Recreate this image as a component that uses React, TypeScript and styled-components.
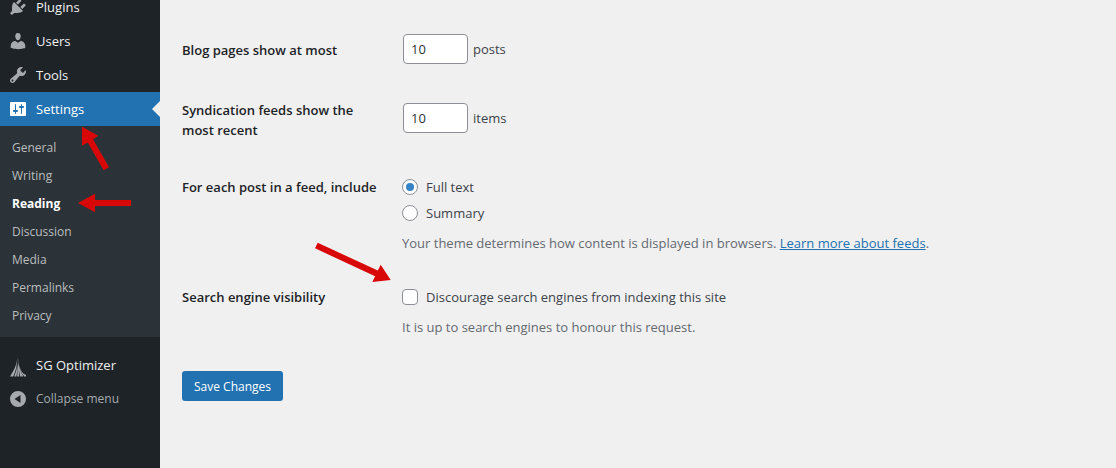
import React from "react";
import styled, { createGlobalStyle, css } from "styled-components";

const GlobalStyle = createGlobalStyle`
  *, *::before, *::after { box-sizing: border-box; }
  body {
    margin: 0;
    background: #f0f0f0;
    color: #3c434a;
    font: 13px/20px "Open Sans", "Noto Sans", sans-serif;
  }
`;

const Page = styled.div`
  position: relative;
  display: flex;
  min-height: 100vh;
  overflow: hidden;
`;

const Sidebar = styled.nav`
  flex: 0 0 160px;
  background: #1d2327;
`;

const Menu = styled.ul`
  list-style: none;
  margin: -10px 0 0;
  padding: 0;
`;

const MenuItem = styled.li<{ $separated?: boolean }>`
  margin-top: ${(p) => (p.$separated ? "11px" : "0")};
`;

const menuRow = css`
  position: relative;
  display: flex;
  align-items: center;
  gap: 8px;
  width: 100%;
  height: 34px;
  padding: 0 8px;
  font: inherit;
  text-decoration: none;
`;

const MenuLink = styled.a<{ $current?: boolean }>`
  ${menuRow}
  color: ${(p) => (p.$current ? "#fff" : "#f0f0f1")};
  background: ${(p) => (p.$current ? "#2271b1" : "transparent")};
  fill: ${(p) => (p.$current ? "#fff" : "#a7aaad")};

  ${(p) =>
    p.$current &&
    css`
      &::after {
        content: "";
        position: absolute;
        right: 0;
        top: 9px;
        border: 8px solid transparent;
        border-left-width: 0;
        border-right-color: #f0f0f0;
      }
    `}
`;

const CollapseButton = styled.button`
  ${menuRow}
  border: 0;
  background: none;
  color: #a7aaad;
  fill: #a7aaad;
  font-size: 12px;
  line-height: 20px;
  text-align: left;
`;

const SubMenu = styled.ul`
  list-style: none;
  margin: 0;
  padding: 8px 0 7px;
  background: #2c3338;
`;

const SubLink = styled.a<{ $current?: boolean }>`
  display: block;
  padding: 4px 12px;
  font-size: 12px;
  text-decoration: none;
  color: ${(p) => (p.$current ? "#fff" : "#bbbdbf")};
  font-weight: ${(p) => (p.$current ? 700 : 400)};
`;

const Content = styled.main`
  flex: 1;
  min-width: 0;
  padding: 19px 20px 60px 22px;
`;

const Row = styled.div`
  display: grid;
  grid-template-columns: 220px minmax(0, 1fr);
`;

const Heading = styled.div<{ $group?: boolean }>`
  padding: ${(p) => (p.$group ? "20px 20px 18px 0" : "21px 20px 17px 0")};
  font-weight: 600;
  color: #1d2327;
`;

const NumberField = styled.div`
  display: flex;
  align-items: center;
  gap: 5px;
  padding: 15px 1px;
`;

const Choices = styled.div`
  padding: 17px 0 14px;
`;

const NumberInput = styled.input`
  width: 65px;
  height: 30px;
  padding: 0 7px;
  border: 1px solid #8c8f94;
  border-radius: 4px;
  background: #fff;
  color: #2c3338;
  font: inherit;
`;

const Choice = styled.label`
  display: flex;
  align-items: center;
  gap: 8px;
  height: 26px;
`;

const Tick = styled.input`
  appearance: none;
  display: grid;
  place-items: center;
  width: 16px;
  height: 16px;
  margin: 0;
  border: 1px solid #8c8f94;
  border-radius: ${(p) => (p.type === "radio" ? "50%" : "4px")};
  background: #fff;

  &:checked::before {
    content: "";
    width: 8px;
    height: 8px;
    border-radius: ${(p) => (p.type === "radio" ? "50%" : "1px")};
    background: #3582c4;
  }
`;

const Description = styled.p`
  margin: 7px 0 0;
  color: #646970;
`;

const TextLink = styled.a`
  color: #2271b1;
`;

const SaveButton = styled.button`
  height: 30px;
  margin-top: 20px;
  padding: 1px 12px 0;
  border: 0;
  border-radius: 3px;
  background: #2271b1;
  color: #fff;
  font: inherit;
  font-size: 12px;
`;

const Annotations = styled.svg`
  position: absolute;
  left: 0;
  top: 0;
  pointer-events: none;
  fill: #d90808;
`;

const icons = {
  plugins:
    "M13.11 4.36L9.87 7.6 8 5.73l3.24-3.24c.35-.34 1.05-.2 1.56.32.52.51.66 1.21.31 1.55zm-8 1.77l.91-1.12 9.01 9.01-1.19.84c-.71.71-2.63 1.16-3.82 1.16H6.14L4.9 17.26c-.59.59-1.54.59-2.12 0-.59-.58-.59-1.53 0-2.12l1.24-1.24v-3.88c0-1.13.4-3.19 1.09-3.89zm7.26 3.97l3.24-3.24c.34-.35 1.04-.21 1.55.31.52.51.66 1.21.31 1.55l-3.24 3.25z",
  users:
    "M10 9.25c-2.27 0-2.73-3.44-2.73-3.44C7 4.02 7.82 2 9.97 2c2.16 0 2.98 2.02 2.71 3.81 0 0-.41 3.44-2.68 3.44zm0 2.57L12.72 10c2.39 0 4.52 2.33 4.52 4.53v2.49s-3.65 1.13-7.24 1.13c-3.65 0-7.24-1.13-7.24-1.13v-2.49c0-2.25 1.94-4.48 4.47-4.48z",
  tools:
    "M16.68 9.77c-1.34 1.34-3.3 1.67-4.95.99l-5.41 6.52c-.99.99-2.59.99-3.58 0s-.99-2.59 0-3.57l6.52-5.42c-.68-1.65-.35-3.61.99-4.95 1.28-1.28 3.12-1.62 4.72-1.06l-2.89 2.89 2.82 2.82 2.86-2.87c.53 1.58.18 3.39-1.08 4.65zM3.81 16.21c.4.39 1.04.39 1.43 0 .4-.4.4-1.04 0-1.43-.39-.4-1.03-.4-1.43 0-.39.39-.39 1.03 0 1.43z",
  settings:
    "M18 16V4c0-.55-.45-1-1-1H3c-.55 0-1 .45-1 1v12c0 .55.45 1 1 1h14c.55 0 1-.45 1-1zM8 11h1c.55 0 1 .45 1 1s-.45 1-1 1H8v1.5c0 .28-.22.5-.5.5s-.5-.22-.5-.5V13H6c-.55 0-1-.45-1-1s.45-1 1-1h1V5.5c0-.28.22-.5.5-.5s.5.22.5.5V11zm5-2h-1c-.55 0-1-.45-1-1s.45-1 1-1h1V5.5c0-.28.22-.5.5-.5s.5.22.5.5V7h1c.55 0 1 .45 1 1s-.45 1-1 1h-1v5.5c0 .28-.22.5-.5.5s-.5-.22-.5-.5V9z",
  optimizer:
    "M9.3 2.500C9 8 7.200 12.500 5.200 16L2 21.500H5.200C7.500 17 9.300 10 9.300 2.500zM9.200 10C9 14 7.500 18 6.200 21.500H8.300C9.200 18 9.600 14 9.200 10zM9.900 9L9.200 21.500H11.200L10.400 9zM9.900 2.500C10.300 8 11.400 14 13.200 17.500L15.300 21.500H12.300C10.800 16 10 10 9.900 2.500zM11.400 9C12 13 13 16.500 15.300 18.500L18 20V21.500H16.300C13 18 11.700 14 11.400 9z",
  collapse:
    "M10 2a8 8 0 1 1 0 16 8 8 0 0 1 0-16zm2.500 4L6.500 10l6 4z",
};

function Icon({ name }: { name: keyof typeof icons }) {
  return (
    <svg width="20" height="20" viewBox="0 0 20 20" overflow="visible" aria-hidden="true">
      <path fillRule="evenodd" d={icons[name]} />
    </svg>
  );
}

const subPages = ["General", "Writing", "Reading", "Discussion", "Media", "Permalinks", "Privacy"];

export default function App() {
  return (
    <>
      <GlobalStyle />
      <Page>
        <Sidebar aria-label="Main menu">
          <Menu>
            <MenuItem><MenuLink href="#plugins"><Icon name="plugins" />Plugins</MenuLink></MenuItem>
            <MenuItem><MenuLink href="#users"><Icon name="users" />Users</MenuLink></MenuItem>
            <MenuItem><MenuLink href="#tools"><Icon name="tools" />Tools</MenuLink></MenuItem>
            <MenuItem>
              <MenuLink href="#settings" $current><Icon name="settings" />Settings</MenuLink>
              <SubMenu>
                {subPages.map((page) => (
                  <li key={page}>
                    <SubLink href={"#" + page.toLowerCase()} $current={page === "Reading"}>{page}</SubLink>
                  </li>
                ))}
              </SubMenu>
            </MenuItem>
            <MenuItem $separated><MenuLink href="#optimizer"><Icon name="optimizer" />SG Optimizer</MenuLink></MenuItem>
            <MenuItem><CollapseButton type="button"><Icon name="collapse" />Collapse menu</CollapseButton></MenuItem>
          </Menu>
        </Sidebar>

        <Content>
          <form onSubmit={(e) => e.preventDefault()}>
            <Row>
              <Heading as="label" htmlFor="posts">Blog pages show at most</Heading>
              <NumberField>
                <NumberInput id="posts" type="number" defaultValue={10} />
                posts
              </NumberField>
            </Row>
            <Row>
              <Heading as="label" htmlFor="items">Syndication feeds show the most recent</Heading>
              <NumberField>
                <NumberInput id="items" type="number" defaultValue={10} />
                items
              </NumberField>
            </Row>
            <Row role="radiogroup" aria-labelledby="feed">
              <Heading id="feed" $group>For each post in a feed, include</Heading>
              <Choices>
                <Choice><Tick type="radio" name="feed" defaultChecked />Full text</Choice>
                <Choice><Tick type="radio" name="feed" />Summary</Choice>
                <Description>
                  Your theme determines how content is displayed in browsers.{" "}
                  <TextLink href="#feeds">Learn more about feeds</TextLink>.
                </Description>
              </Choices>
            </Row>
            <Row role="group" aria-labelledby="visibility">
              <Heading id="visibility" $group>Search engine visibility</Heading>
              <Choices>
                <Choice><Tick type="checkbox" />Discourage search engines from indexing this site</Choice>
                <Description>It is up to search engines to honour this request.</Description>
              </Choices>
            </Row>
            <SaveButton type="submit">Save Changes</SaveButton>
          </form>
        </Content>

        <Annotations width="400" height="300" aria-hidden="true">
          <path d="M82 126.700L98.300 135.700L93 139.300L109 167.200L103.700 170.300L87.700 142.400L82 145.700z" />
          <path d="M78 203L95 193.700V200H131V206H95V212.300z" />
          <path d="M390.700 280L380.700 264.700L377.800 270.600L317.700 242.700L315 248.300L375.100 276.200L372.300 282z" />
        </Annotations>
      </Page>
    </>
  );
}
